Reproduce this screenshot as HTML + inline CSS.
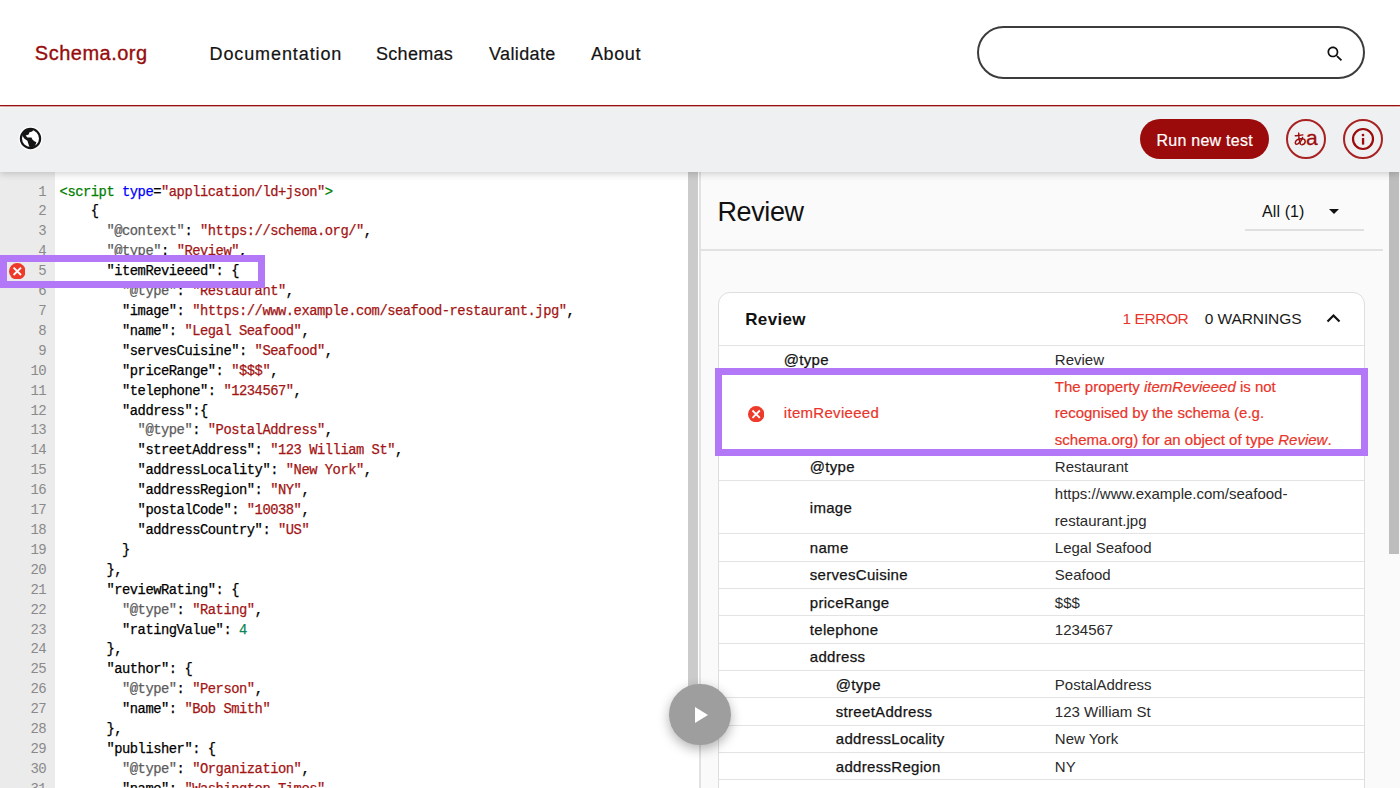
<!DOCTYPE html>
<html><head><meta charset="utf-8">
<style>
*{box-sizing:border-box;margin:0;padding:0}
html,body{width:1400px;height:788px;overflow:hidden;background:#fff;font-family:"Liberation Sans",sans-serif}
.a{position:absolute;white-space:pre}
#hdr{position:absolute;left:0;top:0;width:1400px;height:105px;background:#fff}
#redline{position:absolute;left:0;top:105px;width:1400px;height:1px;background:#9d0f0f;box-shadow:0 1px 0 #dcaaaa}
.nav{font-size:18px;line-height:18px;color:#141414;top:45.2px;-webkit-text-stroke:0.2px #141414}
#logo{font-size:20px;line-height:20px;color:#960c0c;top:42.8px;left:34.8px;letter-spacing:0.5px;-webkit-text-stroke:0.35px #960c0c}
#search{position:absolute;left:977px;top:26px;width:388px;height:53px;border:2px solid #3c3c3c;border-radius:27px;background:#fff}
#tb{position:absolute;left:0;top:108px;width:1400px;height:63.5px;background:#eef0f2;box-shadow:0 2px 7px rgba(0,0,0,0.18);z-index:5}
#run{position:absolute;left:1140px;top:119px;width:129px;height:40px;border-radius:20px;background:#9b0b0b;z-index:6}
.circ{position:absolute;top:119px;width:40px;height:40px;border-radius:50%;border:2px solid #a82222;z-index:6}
#gutter{position:absolute;left:0;top:171px;width:55px;height:617px;background:#ebebeb}
#code{position:absolute;left:0;top:182.5px;width:688px;font-family:"Liberation Mono",monospace;font-size:13.8px;line-height:19.91px;letter-spacing:-0.48px;-webkit-text-stroke:0.25px currentColor}
.ln{position:absolute;left:0;width:46px;text-align:right;color:#8a8a8a;letter-spacing:-0.6px;font-size:14px;-webkit-text-stroke:0}
.cl{position:absolute;left:59.6px;color:#000}
.s{color:#a31515}.k{color:#000}.g{color:#5c5c5c}.t{color:#008000}.at{color:#0000ff}.n{color:#098658}
#escroll{position:absolute;left:688px;top:171px;width:10px;height:544px;background:#cbcbcb}
#pborder{position:absolute;left:699px;top:171px;width:2px;height:617px;background:#e2e2e2}
#pane{position:absolute;left:701px;top:171px;width:699px;height:617px;background:#fafafa}
#rscroll{position:absolute;left:1389px;top:171px;width:10px;height:382.5px;background:#bdbdbd}
#card{position:absolute;left:718px;top:291.7px;width:647px;height:600px;background:#fff;border:1px solid #dedede;border-radius:12px}
.row{position:absolute;left:719px;width:645px;border-bottom:1px solid #e3e3e3}
.lab{position:absolute;font-size:15px;line-height:26.33px;color:#141414;-webkit-text-stroke:0.25px #141414;letter-spacing:0.3px}
.val{position:absolute;left:335.8px;font-size:15px;line-height:26.33px;color:#2a2a2a}
.err{color:#e9342a !important;-webkit-text-stroke:0.2px #e9342a}
.pbox{position:absolute;border:7px solid #b378f8;z-index:20}
</style></head><body>
<div id="hdr"></div>
<div id="logo" class="a">Schema.org</div>
<div class="a nav" style="left:209.5px;letter-spacing:0.9px">Documentation</div>
<div class="a nav" style="left:376px;letter-spacing:0.3px">Schemas</div>
<div class="a nav" style="left:489px;letter-spacing:0.38px">Validate</div>
<div class="a nav" style="left:591px;letter-spacing:0.6px">About</div>
<div id="search"></div>
<svg class="a" style="left:1325px;top:44px" width="20" height="20" viewBox="0 0 24 24"><path fill="#111" d="M15.5 14h-.79l-.28-.27C15.41 12.59 16 11.11 16 9.5 16 5.91 13.09 3 9.5 3S3 5.91 3 9.5 5.91 16 9.5 16c1.61 0 3.09-.59 4.23-1.57l.27.28v.79l5 4.99L20.49 19l-4.99-5zm-6 0C7.01 14 5 11.99 5 9.5S7.01 5 9.5 5 14 7.01 14 9.5 11.99 14 9.5 14z"/></svg>
<div id="redline"></div>
<div id="tb"></div>
<!-- globe -->
<svg class="a" style="left:18px;top:126px;z-index:6" width="25" height="25" viewBox="0 0 25 25">
<circle cx="12.5" cy="12.5" r="12" fill="#fff"/>
<circle cx="12.5" cy="12.5" r="9.6" fill="#fff" stroke="#151515" stroke-width="2.2"/>
<path fill="#151515" d="M4.2 9.2 C6 5 9.5 3.2 12.5 3.2 L15.5 3.6 L14.2 5.6 L11.5 6.2 L10.6 8.6 L7.6 9.6 L9.4 11.6 L13.4 11.4 L14.6 13.8 L16.4 15.2 L18.4 16.2 L17.2 19.4 C15.6 21 13.6 21.8 11.8 21.8 L10.6 18.6 L9.4 14.8 L6.2 12.4 Z"/>
</svg>
<div id="run"></div>
<div class="a" style="left:1156.5px;top:132.5px;font-size:16px;line-height:16px;color:#fff;z-index:7;-webkit-text-stroke:0.2px #fff;letter-spacing:0.25px">Run new test</div>
<div class="circ" style="left:1286px"></div>
<div class="circ" style="left:1343px"></div>
<svg class="a" style="left:1293.6px;top:132.2px;z-index:7" width="12.5" height="13.8" viewBox="0 0 12.5 13.8"><g fill="none" stroke="#9b0b0b" stroke-width="1.45" stroke-linecap="round"><path d="M1.3 3.7 Q5 3.8 8.9 2.9"/><path d="M4.7 1.1 Q4.4 7.2 6.4 12.2"/><path d="M8.6 5.4 Q7.2 10 3.8 11.9 Q1.3 13 1.3 10.7 Q1.8 7.3 6.6 6.7 Q11 6.4 11.2 9.4 Q11.2 12.2 7.8 12.8"/></g></svg>
<div class="a" id="aa" style="left:1306px;top:126.5px;font-size:21px;line-height:21px;color:#9b0b0b;z-index:7;-webkit-text-stroke:0.3px #9b0b0b">a</div>
<svg class="a" style="left:1351px;top:127px;z-index:7" width="24" height="24" viewBox="0 0 24 24"><circle cx="12" cy="12" r="10" fill="none" stroke="#9b0b0b" stroke-width="2.2"/><rect x="10.9" y="11" width="2.3" height="6.6" fill="#9b0b0b"/><circle cx="12" cy="8.1" r="1.35" fill="#9b0b0b"/></svg>

<!-- editor -->
<div id="gutter"></div>
<div id="code">
<div class="ln a" style="top:0.0px">1</div>
<div class="cl a" style="top:0.0px"><span class="t">&lt;script </span><span class="at">type</span><span class="k">=</span><span class="s">&quot;application/ld+json&quot;</span><span class="t">&gt;</span></div>
<div class="ln a" style="top:19.91px">2</div>
<div class="cl a" style="top:19.91px"><span class="k">    {</span></div>
<div class="ln a" style="top:39.82px">3</div>
<div class="cl a" style="top:39.82px"><span class="k">      </span><span class="g">&quot;@context&quot;</span><span class="k">: </span><span class="s">&quot;https://schema.org/&quot;</span><span class="k">,</span></div>
<div class="ln a" style="top:59.73px">4</div>
<div class="cl a" style="top:59.73px"><span class="k">      </span><span class="g">&quot;@type&quot;</span><span class="k">: </span><span class="s">&quot;Review&quot;</span><span class="k">,</span></div>
<div class="ln a" style="top:79.64px">5</div>
<div class="cl a" style="top:79.64px"><span class="k">      &quot;itemRevieeed&quot;: {</span></div>
<div class="ln a" style="top:99.55px">6</div>
<div class="cl a" style="top:99.55px"><span class="k">        </span><span class="g">&quot;@type&quot;</span><span class="k">: </span><span class="s">&quot;Restaurant&quot;</span><span class="k">,</span></div>
<div class="ln a" style="top:119.46px">7</div>
<div class="cl a" style="top:119.46px"><span class="k">        &quot;image&quot;: </span><span class="s">&quot;https://www.example.com/seafood-restaurant.jpg&quot;</span><span class="k">,</span></div>
<div class="ln a" style="top:139.37px">8</div>
<div class="cl a" style="top:139.37px"><span class="k">        &quot;name&quot;: </span><span class="s">&quot;Legal Seafood&quot;</span><span class="k">,</span></div>
<div class="ln a" style="top:159.28px">9</div>
<div class="cl a" style="top:159.28px"><span class="k">        &quot;servesCuisine&quot;: </span><span class="s">&quot;Seafood&quot;</span><span class="k">,</span></div>
<div class="ln a" style="top:179.19px">10</div>
<div class="cl a" style="top:179.19px"><span class="k">        &quot;priceRange&quot;: </span><span class="s">&quot;$$$&quot;</span><span class="k">,</span></div>
<div class="ln a" style="top:199.1px">11</div>
<div class="cl a" style="top:199.1px"><span class="k">        &quot;telephone&quot;: </span><span class="s">&quot;1234567&quot;</span><span class="k">,</span></div>
<div class="ln a" style="top:219.01px">12</div>
<div class="cl a" style="top:219.01px"><span class="k">        &quot;address&quot;:{</span></div>
<div class="ln a" style="top:238.92px">13</div>
<div class="cl a" style="top:238.92px"><span class="k">          </span><span class="g">&quot;@type&quot;</span><span class="k">: </span><span class="s">&quot;PostalAddress&quot;</span><span class="k">,</span></div>
<div class="ln a" style="top:258.83px">14</div>
<div class="cl a" style="top:258.83px"><span class="k">          &quot;streetAddress&quot;: </span><span class="s">&quot;123 William St&quot;</span><span class="k">,</span></div>
<div class="ln a" style="top:278.74px">15</div>
<div class="cl a" style="top:278.74px"><span class="k">          &quot;addressLocality&quot;: </span><span class="s">&quot;New York&quot;</span><span class="k">,</span></div>
<div class="ln a" style="top:298.65px">16</div>
<div class="cl a" style="top:298.65px"><span class="k">          &quot;addressRegion&quot;: </span><span class="s">&quot;NY&quot;</span><span class="k">,</span></div>
<div class="ln a" style="top:318.56px">17</div>
<div class="cl a" style="top:318.56px"><span class="k">          &quot;postalCode&quot;: </span><span class="s">&quot;10038&quot;</span><span class="k">,</span></div>
<div class="ln a" style="top:338.47px">18</div>
<div class="cl a" style="top:338.47px"><span class="k">          &quot;addressCountry&quot;: </span><span class="s">&quot;US&quot;</span></div>
<div class="ln a" style="top:358.38px">19</div>
<div class="cl a" style="top:358.38px"><span class="k">        }</span></div>
<div class="ln a" style="top:378.29px">20</div>
<div class="cl a" style="top:378.29px"><span class="k">      },</span></div>
<div class="ln a" style="top:398.2px">21</div>
<div class="cl a" style="top:398.2px"><span class="k">      &quot;reviewRating&quot;: {</span></div>
<div class="ln a" style="top:418.11px">22</div>
<div class="cl a" style="top:418.11px"><span class="k">        </span><span class="g">&quot;@type&quot;</span><span class="k">: </span><span class="s">&quot;Rating&quot;</span><span class="k">,</span></div>
<div class="ln a" style="top:438.02px">23</div>
<div class="cl a" style="top:438.02px"><span class="k">        &quot;ratingValue&quot;: </span><span class="n">4</span></div>
<div class="ln a" style="top:457.93px">24</div>
<div class="cl a" style="top:457.93px"><span class="k">      },</span></div>
<div class="ln a" style="top:477.84px">25</div>
<div class="cl a" style="top:477.84px"><span class="k">      &quot;author&quot;: {</span></div>
<div class="ln a" style="top:497.75px">26</div>
<div class="cl a" style="top:497.75px"><span class="k">        </span><span class="g">&quot;@type&quot;</span><span class="k">: </span><span class="s">&quot;Person&quot;</span><span class="k">,</span></div>
<div class="ln a" style="top:517.66px">27</div>
<div class="cl a" style="top:517.66px"><span class="k">        &quot;name&quot;: </span><span class="s">&quot;Bob Smith&quot;</span></div>
<div class="ln a" style="top:537.57px">28</div>
<div class="cl a" style="top:537.57px"><span class="k">      },</span></div>
<div class="ln a" style="top:557.48px">29</div>
<div class="cl a" style="top:557.48px"><span class="k">      &quot;publisher&quot;: {</span></div>
<div class="ln a" style="top:577.39px">30</div>
<div class="cl a" style="top:577.39px"><span class="k">        </span><span class="g">&quot;@type&quot;</span><span class="k">: </span><span class="s">&quot;Organization&quot;</span><span class="k">,</span></div>
<div class="ln a" style="top:597.3px">31</div>
<div class="cl a" style="top:597.3px"><span class="k">        &quot;name&quot;: </span><span class="s">&quot;Washington Times&quot;</span></div>
</div>
<div id="escroll"></div>
<div id="pborder"></div>
<div id="pane"></div>
<div id="rscroll"></div>
<!-- right pane -->
<div class="a" style="left:717.5px;top:199.1px;font-size:27px;line-height:27px;color:#111;letter-spacing:-0.4px">Review</div>
<div class="a" style="left:1262px;top:203.8px;font-size:16px;line-height:16px;color:#111;letter-spacing:0.1px">All (1)</div>
<div class="a" style="left:1329px;top:209px;width:0;height:0;border-left:5.25px solid transparent;border-right:5.25px solid transparent;border-top:5.5px solid #111"></div>
<div class="a" style="left:1245px;top:229px;width:119px;height:1.5px;background:#e0e0e0"></div>
<div class="a" style="left:701px;top:249px;width:682px;height:2px;background:#e2e2e2"></div>
<div id="card"></div>
<div class="a" style="left:745.3px;top:311.3px;font-size:17px;line-height:17px;color:#111;font-weight:bold;letter-spacing:0.3px">Review</div>
<div class="a" style="left:1122.5px;top:310.6px;font-size:15.5px;line-height:15.5px;color:#e9342a;letter-spacing:-0.45px">1 ERROR</div>
<div class="a" style="left:1204.8px;top:310.6px;font-size:15.5px;line-height:15.5px;color:#1a1a1a;letter-spacing:-0.1px">0 WARNINGS</div>
<svg class="a" style="left:1326px;top:313px" width="15" height="10" viewBox="0 0 15 10"><path d="M1.5 8.5L7.5 2.5L13.5 8.5" fill="none" stroke="#111" stroke-width="2.2"/></svg>
<div class="a" style="left:719px;top:345px;width:645px;height:1px;background:#e3e3e3"></div>
<!--TABLE-->
<div class="row" style="top:346.00px;height:27.33px">
<div class="lab" style="left:64.8px;top:0.70px">@type</div>
<div class="val" style="top:0.7px">Review</div>
</div>
<div class="row" style="top:373.33px;height:79.99px">
<svg class="a" style="left:28.6px;top:32.5px" width="16.3" height="16.3" viewBox="0 0 24 24"><circle cx="12" cy="12" r="12" fill="#ee3a2a"/><path d="M6.6 6.6L17.4 17.4M17.4 6.6L6.6 17.4" stroke="#fff" stroke-width="2.7"/></svg>
<div class="lab err" style="left:64.8px;top:27.03px">itemRevieeed</div>
<div class="val err" style="top:0.7px">The property <i>itemRevieeed</i> is not<br>recognised by the schema (e.g.<br>schema.org) for an object of type <i>Review</i>.</div>
</div>
<div class="row" style="top:453.32px;height:27.33px">
<div class="lab" style="left:90.8px;top:0.70px">@type</div>
<div class="val" style="top:0.7px">Restaurant</div>
</div>
<div class="row" style="top:480.65px;height:53.66px">
<div class="lab" style="left:90.8px;top:13.86px">image</div>
<div class="val" style="top:0.7px">https://www.example.com/seafood-<br>restaurant.jpg</div>
</div>
<div class="row" style="top:534.31px;height:27.33px">
<div class="lab" style="left:90.8px;top:0.70px">name</div>
<div class="val" style="top:0.7px">Legal Seafood</div>
</div>
<div class="row" style="top:561.64px;height:27.33px">
<div class="lab" style="left:90.8px;top:0.70px">servesCuisine</div>
<div class="val" style="top:0.7px">Seafood</div>
</div>
<div class="row" style="top:588.97px;height:27.33px">
<div class="lab" style="left:90.8px;top:0.70px">priceRange</div>
<div class="val" style="top:0.7px">$$$</div>
</div>
<div class="row" style="top:616.30px;height:27.33px">
<div class="lab" style="left:90.8px;top:0.70px">telephone</div>
<div class="val" style="top:0.7px">1234567</div>
</div>
<div class="row" style="top:643.63px;height:27.33px">
<div class="lab" style="left:90.8px;top:0.70px">address</div>
<div class="val" style="top:0.7px"></div>
</div>
<div class="row" style="top:670.96px;height:27.33px">
<div class="lab" style="left:116.8px;top:0.70px">@type</div>
<div class="val" style="top:0.7px">PostalAddress</div>
</div>
<div class="row" style="top:698.29px;height:27.33px">
<div class="lab" style="left:116.8px;top:0.70px">streetAddress</div>
<div class="val" style="top:0.7px">123 William St</div>
</div>
<div class="row" style="top:725.62px;height:27.33px">
<div class="lab" style="left:116.8px;top:0.70px">addressLocality</div>
<div class="val" style="top:0.7px">New York</div>
</div>
<div class="row" style="top:752.95px;height:27.33px">
<div class="lab" style="left:116.8px;top:0.70px">addressRegion</div>
<div class="val" style="top:0.7px">NY</div>
</div>
<div class="row" style="top:780.28px;height:27.33px">
<div class="lab" style="left:116.8px;top:0.70px"></div>
<div class="val" style="top:0.7px"></div>
</div>
<div class="row" style="top:807.61px;height:27.33px">
<div class="lab" style="left:116.8px;top:0.70px"></div>
<div class="val" style="top:0.7px"></div>
</div>
<!--/TABLE-->
<div class="pbox" style="left:0px;top:254.7px;width:264.7px;height:33px"></div>
<div class="pbox" style="left:715.4px;top:368.1px;width:652.3px;height:88px"></div>
<div class="a" style="left:669.3px;top:684px;width:61.3px;height:61.3px;border-radius:50%;background:#9e9e9e;box-shadow:0 4px 12px rgba(0,0,0,0.3);z-index:15"></div>
<svg class="a" style="left:695px;top:707px;z-index:16" width="13.2" height="16" viewBox="0 0 13.2 16"><path d="M0 0L13.2 8L0 16Z" fill="#fff"/></svg>
<svg class="a" style="left:8.7px;top:262.9px;z-index:10" width="16.6" height="16.6" viewBox="0 0 24 24"><circle cx="12" cy="12" r="12" fill="#ee3a2a"/><path d="M6.6 6.6L17.4 17.4M17.4 6.6L6.6 17.4" stroke="#fff" stroke-width="2.7"/></svg>


</body></html>
